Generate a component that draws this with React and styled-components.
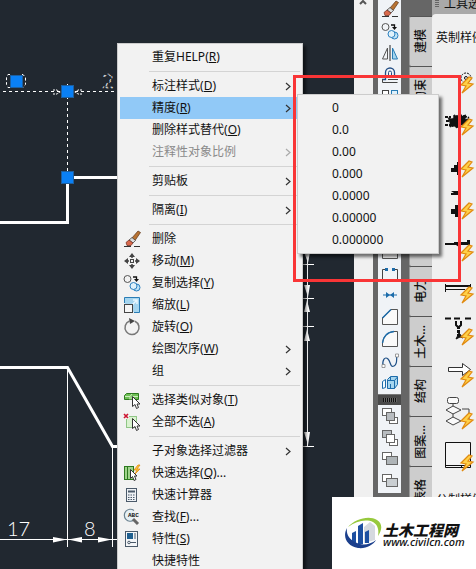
import React from "react"
import styled, { createGlobalStyle, css } from "styled-components"

const GlobalStyle = createGlobalStyle`
  * {
    box-sizing: border-box;
  }
  body {
    margin: 0;
    overflow: hidden;
    font-family: "Noto Sans", "Noto Sans CJK SC", sans-serif;
    font-size: 12px;
    color: #111;
  }
  button {
    border: none;
    background: none;
    padding: 0;
    font: inherit;
    color: inherit;
  }
  svg {
    display: block;
    flex: none;
  }
`

const Screen = styled.div`
  position: relative;
  display: flex;
  height: 100vh;
  overflow: hidden;
  background-color: #212830;
`

const Canvas = styled.main`
  flex: 1;
  min-width: 0;
  overflow: hidden;
`

const ScrollTrack = styled.div`
  width: 19px;
  background-color: #f0f0f0;
  display: flex;
  justify-content: center;
`

const ToolColumn = styled.div`
  width: 36px;
  padding: 0 8px 0 5px;
  background-color: #666;
`

const Toolbar = styled.div`
  display: flex;
  flex-direction: column;
  margin-top: -2px;
  background-color: #f0f3f7;
  .grip {
    height: 11px;
    background-color: #4a4a4a;
    border-top: 1px solid #777;
    display: flex;
    align-items: center;
    justify-content: center;
    &::after {
      content: "";
      width: 14px;
      height: 4px;
      background: repeating-linear-gradient(90deg, #111 0 1px, #666 1px 2px);
    }
  }
`

const ToolButton = styled.button`
  height: 22px;
  display: flex;
  align-items: center;
  justify-content: center;
`

const TabColumn = styled.div`
  width: 23px;
  padding-top: 16px;
  background-color: #666;
`

const Tab = styled.button`
  width: 23px;
  height: 50px;
  display: flex;
  align-items: center;
  justify-content: center;
  background-color: #cdcdcd;
  border-top: 1px solid #555;
  border-left: 1px solid #999;
  border-radius: 2px 0 0 2px;
  span {
    writing-mode: vertical-rl;
    text-orientation: sideways;
    transform: rotate(180deg);
    line-height: 20px;
    font-weight: 500;
  }
`

const Palette = styled.aside`
  width: 44px;
  background-color: #a9a9a9;
  overflow: hidden;
  white-space: nowrap;
  header {
    height: 14px;
    padding: 0 0 6px 3px;
    display: flex;
    align-items: center;
    gap: 5px;
    line-height: 20px;
  }
`

const PaletteBody = styled.div`
  background-color: #f0f0f0;
  border-radius: 4px 0 0 0;
  height: 100%;
`

const GroupTitle = styled.h2`
  margin: 0;
  height: 42px;
  padding: 14px 0 0 4px;
  line-height: 20px;
  font-size: 12px;
  font-weight: 400;
`

const PaletteItem = styled.button`
  display: block;
  height: 42px;
`

const panel = css`
  position: absolute;
  display: flex;
  flex-direction: column;
  padding: 2px;
  background-color: #f2f2f2;
  border: 1px solid #ccc;
  box-shadow: 3px 3px 3px rgba(0, 0, 0, 0.55);
`

const ContextMenu = styled.div`
  ${panel}
  left: 117px;
  top: 43px;
  width: 186px;
  hr {
    width: 151px;
    height: 1px;
    margin: 3px 0 3px 29px;
    border: none;
    background-color: #d4d4d4;
  }
`

const SubMenu = styled.div`
  ${panel}
  left: 297px;
  top: 94px;
  width: 142px;
`

const MenuItem = styled.button`
  flex: none;
  height: 22px;
  display: flex;
  align-items: center;
  text-align: left;
  white-space: nowrap;
  line-height: 20px;
  color: ${({ $disabled }) => ($disabled ? "#8a8a8a" : "#111")};
  background-color: ${({ $active }) => ($active ? "#91c9f7" : "transparent")};
  .icon {
    width: 32px;
    padding-left: 3px;
  }
  .label {
    flex: 1;
  }
  .arrow {
    margin-right: 9px;
  }
`

const RedFrame = styled.div`
  position: absolute;
  left: 293px;
  top: 75px;
  width: 168px;
  height: 207px;
  border: 3px solid #f93536;
  pointer-events: none;
`

const Watermark = styled.a`
  position: absolute;
  right: 0;
  bottom: 0;
  width: 144px;
  height: 72px;
  padding: 0 0 1px 12px;
  display: flex;
  align-items: center;
  background-color: #fff;
  color: #111;
  text-decoration: none;
  white-space: nowrap;
  font-style: italic;
  .site {
    display: flex;
    flex-direction: column;
    padding-top: 6px;
  }
  strong {
    font-size: 15px;
    line-height: 12px;
    font-weight: 900;
  }
  small {
    font-size: 11px;
    line-height: 12px;
    font-weight: 500;
  }
`

const Svg = ({ size = 18, width = size, height = size, children }) => (
  <svg width={width} height={height} viewBox={`0 0 ${width} ${height}`} fill="none" aria-hidden="true">
    {children}
  </svg>
)

/* modify tools, shared by the menu and the toolbar */
const Eraser = () => (
  <Svg>
    <path d="M1 16.500h7M11 16.500h6" stroke="#333" />
    <path d="M8.500 8.500L15 1l2.500 1.500L12 10.500z" fill="#b87333" stroke="#5b3518" strokeWidth=".7" />
    <path d="M6 10l3-2.500 3.500 3L10 13z" fill="#dcdcdc" stroke="#333" strokeWidth=".7" />
    <path d="M3 12.500L6 10l4 3-2 2.500H4z" fill="#d9694c" stroke="#6a2a1c" strokeWidth=".7" />
  </Svg>
)
const Move = () => (
  <Svg>
    <path d="M9 1l3 4H6zM9 17l3-4H6zM1 9l4-3v6zM17 9l-4-3v6z" fill="#444" />
    <path d="M9 4v2M9 12v2M4 9h2M12 9h2" stroke="#444" strokeWidth="1.500" />
    <rect x="7.500" y="7.500" width="3" height="3" stroke="#444" />
  </Svg>
)
const Copy = () => (
  <Svg>
    <circle cx="4.500" cy="5" r="3.500" stroke="#555" />
    <path d="M10 3h3.500v3" stroke="#111" strokeWidth="1.300" />
    <path d="M11 5h5l-2.500 3z" fill="#111" />
    <circle cx="13.500" cy="13.500" r="3.500" fill="#bfe3f7" stroke="#2a80c0" />
    <circle cx="10.500" cy="12" r="3.500" fill="#dff1fb" stroke="#2a80c0" />
  </Svg>
)
const Scale = () => (
  <Svg>
    <path d="M1.500 7V1.500h15v15H11" fill="#a5d5ef" stroke="#2a7db5" />
    <path d="M9 9l5-5M10 4h4v4" stroke="#e8f6fd" strokeWidth="1.500" />
    <rect x="1.500" y="8.500" width="8" height="8" fill="#f5f5f5" stroke="#444" />
  </Svg>
)
const Rotate = () => (
  <Svg>
    <path d="M12 3.200a7 7 0 1 1-5.500-.2" stroke="#777" strokeWidth="1.500" />
    <path d="M6 0l6 3-5 3z" fill="#444" />
  </Svg>
)
const SelectCursor = () => <path d="M9.500 5.500v10l2.500-2 1.500 4 2-1-1.500-3.500h3z" fill="#fff" stroke="#333" />
const SelectSimilar = () => (
  <Svg>
    <path d="M1.500 4.500l2-2h12v6h-14z" fill="#6fbf55" stroke="#2d7a1f" />
    <path d="M2 5.500h5v3M9 8.500v-3h6M7 5.500l2-2.500" stroke="#cdeec0" />
    <SelectCursor />
  </Svg>
)
const Deselect = () => (
  <Svg>
    <rect x="3.500" y="3.500" width="10" height="11" fill="#d9f2cf" stroke="#3a9a2a" strokeDasharray="1 1" />
    <path d="M0 0h6v6H0z" fill="#f2f2f2" />
    <path d="M1 1l4 4M5 1L1 5" stroke="#cc1530" strokeWidth="1.600" />
    <SelectCursor />
  </Svg>
)
const QuickSelect = () => (
  <Svg>
    <rect x="1.500" y="2.500" width="9" height="13" fill="#9fd38b" stroke="#2d7a1f" />
    <path d="M4.500 3v12" stroke="#2d7a1f" />
    <path d="M15 1l-4 5h3l-2 4 5-5h-3l3-4z" fill="#ffc53a" stroke="#e08a10" strokeWidth=".8" />
    <path d="M7.500 5.500v9l2-2 1.500 4 2-1-1.500-3.500h2.500z" fill="#fff" stroke="#333" />
  </Svg>
)
const Calculator = () => (
  <Svg>
    <rect x="3.500" y="2.500" width="10" height="13" fill="#eef1f5" stroke="#4b5a6a" />
    <path d="M5 5.500h7" stroke="#4b5a6a" strokeWidth="2" />
    <path d="M5 9h7M5 11.500h7M5 13.500h7" stroke="#4b5a6a" strokeDasharray="1.500 1" />
  </Svg>
)
const Find = () => (
  <Svg>
    <path d="M11 2.500A6 6 0 1 0 11 12" fill="#e6f0f5" stroke="#6b8290" strokeWidth="1.200" />
    <path d="M10 11l5 5" stroke="#666" strokeWidth="3" />
    <text x="5" y="9" fontSize="6" fontWeight="700" fontFamily="Liberation Mono, monospace" fill="#111">ABC</text>
  </Svg>
)
const Properties = () => (
  <Svg>
    <rect x="2.500" y="1.500" width="12" height="15" fill="#f4f6f8" stroke="#4b5a6a" />
    <rect x="4" y="3" width="6" height="6" fill="#1f5f8f" />
    <path d="M11 4h2M11 6h2M11 8h2M7 12.500h6" stroke="#4b5a6a" />
    <circle cx="6" cy="12.500" r="1.300" stroke="#4b5a6a" />
  </Svg>
)

const Mirror = () => (
  <Svg>
    <path d="M9 1v16" stroke="#222" />
    <path d="M6.500 4v11h-5z" stroke="#555" />
    <path d="M11.500 4v11h5z" fill="#a5d5ef" stroke="#2a7db5" />
  </Svg>
)
const Offset = () => (
  <Svg>
    <path d="M1 13.500h3.500V6.500a4.500 4.500 0 0 1 9 0v4" stroke="#234f86" strokeWidth="1.300" />
    <path d="M7.500 10.500v-4a1.500 1.500 0 0 1 3 0v4z" stroke="#234f86" />
    <path d="M7 13.500h10M1.500 13v3.500h15" stroke="#444" />
  </Svg>
)
const ArrayTool = () => (
  <Svg>
    <rect x="1.500" y="2.500" width="6" height="5" fill="#fff" stroke="#444" />
    <rect x="10.500" y="2.500" width="6" height="5" fill="#dff1fb" stroke="#2a7db5" />
    <rect x="1.500" y="10.500" width="6" height="5" stroke="#2a7db5" />
    <rect x="10.500" y="10.500" width="6" height="5" stroke="#2a7db5" />
  </Svg>
)
const BreakTool = () => (
  <Svg>
    <path d="M5 5.500H1.500V16M13 5.500h3.500V16" stroke="#444" />
    <path d="M4 4h3v3H4zM11 4h3v3h-3z" fill="#1c6cab" />
  </Svg>
)
const Join = () => (
  <Svg>
    <path d="M2 9h14" stroke="#1c6cab" />
    <path d="M5 6l4 3-4 3zM13 6l-4 3 4 3z" fill="#1c6cab" />
  </Svg>
)
const Chamfer = () => (
  <Svg>
    <path d="M1.500 9.500v7h15v-15H10L1.500 10z" fill="#fafafa" stroke="#555" />
    <path d="M1.500 10L10 1.500" stroke="#1c6cab" strokeWidth="1.400" />
  </Svg>
)
const Fillet = () => (
  <Svg>
    <path d="M1.500 13v3.500h15v-15H13C6 2 2 7 1.500 13z" fill="#fafafa" stroke="#555" />
    <path d="M1.500 13C2 7 6 2 13 1.500" stroke="#1c6cab" strokeWidth="1.400" />
  </Svg>
)
const Spline = () => (
  <Svg>
    <path d="M2 14C1 8 4 4 7 7s2 9 6 7 2-7 3-11" stroke="#1c4f86" strokeWidth="1.200" />
    <path d="M1 12.500h3v3H1zM14.500 2h3v3h-3z" fill="#fff" stroke="#777" strokeWidth=".7" />
  </Svg>
)
const Explode = () => (
  <Svg>
    <path d="M6.500 5.500l3-3h7v8l-3 4h-7z" fill="#a5d5ef" stroke="#1c6cab" />
    <path d="M6.500 6.500h7v8M13.500 6.500l3-3.500M9.500 3v3M9.500 10v5" stroke="#1c6cab" />
    <path d="M1.500 7.500v7l3-1v-8z" fill="#f5fbff" stroke="#1c6cab" />
  </Svg>
)
const OrderIcon = ({ back, front, extra }) => (
  <Svg>
    <rect x="1.500" y="1.500" width="9" height="7" fill={back} stroke="#666" />
    {extra && <rect x="8.500" y="10.500" width="8" height="6" fill="#fff" stroke="#666" />}
    <rect x="5.500" y="5.500" width={extra ? 8 : 11} height="8" fill={front} stroke="#666" />
  </Svg>
)

const modifyTools = [
  ["删除", Eraser],
  ["复制", Copy],
  ["镜像", Mirror],
  ["偏移", Offset],
  ["阵列", ArrayTool],
  ["移动", Move],
  ["旋转", Rotate],
  ["缩放", Scale],
  ["拉伸", Scale],
  ["修剪", Join],
  ["延伸", Join],
  ["打断于点", Chamfer],
  ["打断", BreakTool],
  ["合并", Join],
  ["倒角", Chamfer],
  ["圆角", Fillet],
  ["光顺曲线", Spline],
  ["分解", Explode],
]

const orderTools = [
  ["前置", { back: "#fff", front: "#b8bcc0", extra: true }],
  ["后置", { back: "#b8bcc0", front: "#fff", extra: true }],
  ["置于对象之上", { back: "#fff", front: "#aeb4b8" }],
  ["置于对象之下", { back: "#fff", front: "#c9ced2" }],
]

const menuItems = [
  { text: "重复HELP", mnemonic: "R" },
  null,
  { text: "标注样式", mnemonic: "D", sub: true },
  { text: "精度", mnemonic: "R", sub: true, active: true },
  { text: "删除样式替代", mnemonic: "O" },
  { text: "注释性对象比例", sub: true, disabled: true },
  null,
  { text: "剪贴板", sub: true },
  null,
  { text: "隔离", mnemonic: "I", sub: true },
  null,
  { text: "删除", Icon: Eraser },
  { text: "移动", mnemonic: "M", Icon: Move },
  { text: "复制选择", mnemonic: "Y", Icon: Copy },
  { text: "缩放", mnemonic: "L", Icon: Scale },
  { text: "旋转", mnemonic: "O", Icon: Rotate },
  { text: "绘图次序", mnemonic: "W", sub: true },
  { text: "组", sub: true },
  null,
  { text: "选择类似对象", mnemonic: "T", Icon: SelectSimilar },
  { text: "全部不选", mnemonic: "A", Icon: Deselect },
  null,
  { text: "子对象选择过滤器", sub: true },
  { text: "快速选择", mnemonic: "Q", dots: true, Icon: QuickSelect },
  { text: "快速计算器", Icon: Calculator },
  { text: "查找", mnemonic: "F", dots: true, Icon: Find },
  { text: "特性", mnemonic: "S", Icon: Properties },
  { text: "快捷特性" },
]

const precisions = ["0", "0.0", "0.00", "0.000", "0.0000", "0.00000", "0.000000"]

const tabs = ["建模", "约束", "注释", "建筑", "机械", "电力", "土木...", "结构", "图案...", "表格"]

/* symbols of the palette blocks */
const symbols = [
  <g stroke="#111">
    <circle cx="34" cy="22" r="5" strokeDasharray="2 1" />
    <circle cx="34" cy="22" r="1.500" />
  </g>,
  <g stroke="#111" strokeDasharray="3 1">
    <path d="M13 19h6M14 23h6M13 27h6M32 18l5 2M33 25l6-2" strokeWidth="2" />
    <path d="M18 24l-2-4 5 1 1-4 4 1 1-4 3 4 4-1-1 4 5 1-5 3 2 3-7-1-3 3-3-2-4 1v-4z" fill="#111" />
  </g>,
  <path d="M19 28h3v-3h3v-3h4v13h-4v-3h-6z" fill="#111" />,
  <path d="M19 9h10v4H19v-2h3zM19 27h4v-4h4v12h-4v-3h-4z" fill="#111" />,
  <path d="M13 19h9v-1h4l3-2v2h6v-2h3v5h-9l-2 2-3-2h-11z" fill="#111" />,
  <g stroke="#111">
    <path d="M13.500 18v8M38.500 18v3" />
    <path d="M13 20h26" strokeWidth="2" />
    <path d="M13 23.500h20" />
  </g>,
  <g stroke="#111">
    <path d="M13 10.500h6M22 10.500h6M33 10.500h6" strokeWidth="2" />
    <path d="M24 13v4l2 2M29 13v4l-2 2" strokeWidth="2" />
    <path d="M26.500 18v10" strokeWidth="3" strokeDasharray="3 1" />
    <path d="M24 31l3-6 4 5-3-1z" fill="#111" />
  </g>,
  <path d="M16.500 17.500h14v-4l8 6-8 6v-4h-14z" fill="#fff" stroke="#333" />,
  <g stroke="#444" fill="#fafafa">
    <path d="M21 7v22M30 17h7v10" fill="none" />
    <rect x="15.500" y="5.500" width="11" height="6" rx="2" />
    <path d="M14 18l7-4 8 4-8 4zM14 29l7-4 8 4-8 4z" />
  </g>,
  <g stroke="#111">
    <path d="M13.500 8.500h25v25h-25z" fill="#f4f4f4" />
    <path d="M14 31.500h24M29.500 31v3" />
  </g>,
]

const Bolt = () => (
  <path d="M37 21L29 29l5 1-4 7 11-9-5-1 4-5z" fill="#ffd047" stroke="#e08a10" strokeWidth="1.200" />
)

const Drawing = () => (
  <svg width="354" height="569" viewBox="0 0 354 569" fill="none" stroke="#fff">
    {/* outline of the part */}
    <g strokeWidth="3">
      <path d="M0 222.500h67.500v-45H354" />
      <path d="M0 367.500h67.500l45 79H125" />
    </g>
    {/* selected dimension */}
    <g strokeDasharray="3 3">
      <path d="M3 91.500h115" />
      <path d="M67.500 84v88" />
    </g>
    <g strokeDasharray="2 1">
      <path d="M53 90h4l4 3M53 94h4l4-3M82 90h-4l-4 3M82 94h-4l-4-3" />
    </g>
    <g strokeDasharray="3 2">
      <path d="M10 74.500H8l-1.500 3v7l1.500 3h2M22 74.500h1l2.500 3v7l-2.500 3h-1" />
    </g>
    <text x="102" y="88" fontSize="20" fontFamily="Lato, sans-serif" fontWeight="300" strokeWidth=".7" strokeDasharray="2 3">2</text>
    {/* lower dimension chain */}
    <path d="M67.500 368v179M112.500 446v101M0 539.500h118" />
    <path d="M53 537l14 2.500-14 3zM82 537l-14 2.500 14 3zM98 537l14 2.500-14 3z" fill="#fff" stroke="none" />
    <g fill="#fff" stroke="none" fontSize="20" fontWeight="300" fontFamily="Lato, sans-serif">
      <text x="7" y="536">17</text>
      <text x="84" y="536">8</text>
    </g>
    {/* right dimension chain */}
    <path d="M307.500 250v196M303 264.500h11M303 298.500h11M303 326.500h11M303 446.500h11" />
    <path d="M304 252h6l-2 11zM304 285h6l-2 12zM304 312h6l-3-12zM304 341h6l-3-12zM304 432h6l-2 13z" fill="#fff" stroke="none" />
    <g fill="#0a80f5" stroke="#1c5e9e">
      <rect x="10.500" y="75.500" width="12" height="12" />
      <rect x="61.500" y="85.500" width="12" height="12" />
      <rect x="61.500" y="171.500" width="12" height="12" />
    </g>
  </svg>
)

const Logo = () => (
  <Svg width={39} height={34}>
    <path d="M8 17l4-2v12l-4-1z" fill="#1d4fa0" />
    <path d="M14 10l5-3v21h-5z" fill="#1d4fa0" />
    <path d="M20 11l6-5 5 4v14l-11 3z" fill="#d5d9df" />
    <path d="M21 16l4-2v13h-4z" fill="#1d4fa0" />
    <path d="M3 12C-2 21 3 30 14 32c8 1 15-3 18-8-6 5-15 6-21 2-6-3-9-8-8-14z" fill="#1b3f8c" />
    <path d="M4 11C11 3 25-1 33 4c6 4 5 10 1 16 1-6 0-11-5-14C22 3 12 5 4 11z" fill="#97c93d" />
  </Svg>
)

const App = () => (
  <>
    <GlobalStyle />
    <Screen>
      <Canvas>
        <Drawing />
      </Canvas>
      <ScrollTrack>
        <Svg width={9} height={6}>
          <path d="M1 4l3-3 3 3" stroke="#555" strokeWidth="2" />
        </Svg>
      </ScrollTrack>
      <ToolColumn>
        <Toolbar>
          {modifyTools.map(([name, Icon]) => (
            <ToolButton key={name} aria-label={name}>
              <Icon />
            </ToolButton>
          ))}
          <div className="grip" />
          {orderTools.map(([name, look]) => (
            <ToolButton key={name} aria-label={name}>
              <OrderIcon {...look} />
            </ToolButton>
          ))}
        </Toolbar>
      </ToolColumn>
      <TabColumn>
        {tabs.map(name => (
          <Tab key={name}>
            <span>{name}</span>
          </Tab>
        ))}
      </TabColumn>
      <Palette>
        <header>
          <Svg width={4} height={8}>
            <path d="M1 0v8M3 0v8" stroke="#222" strokeDasharray="1 1" />
          </Svg>
          工具选项板
        </header>
        <PaletteBody>
          <GroupTitle>英制样例</GroupTitle>
          {symbols.map((symbol, i) => (
            <PaletteItem key={i}>
              <Svg width={44} height={42}>
                {symbol}
                <Bolt />
              </Svg>
            </PaletteItem>
          ))}
          <GroupTitle>公制样例</GroupTitle>
        </PaletteBody>
      </Palette>

      <ContextMenu role="menu">
        {menuItems.map((item, i) => {
          if (!item) return <hr key={i} />
          const { text, mnemonic, dots, sub, active, disabled, Icon } = item
          return (
            <MenuItem key={i} role="menuitem" disabled={disabled} $active={active} $disabled={disabled}>
              <span className="icon">{Icon && <Icon />}</span>
              <span className="label">
                {text}
                {mnemonic && <>(<u>{mnemonic}</u>)</>}
                {dots && "..."}
              </span>
              {sub && (
                <span className="arrow">
                  <Svg width={6} height={9}>
                    <path d="M1 1l4 3.500L1 8" stroke={disabled ? "#aaa" : "#333"} strokeWidth="1.200" />
                  </Svg>
                </span>
              )}
            </MenuItem>
          )
        })}
      </ContextMenu>
      <SubMenu role="menu">
        {precisions.map(value => (
          <MenuItem key={value} role="menuitem">
            <span className="icon" />
            <span className="label">{value}</span>
          </MenuItem>
        ))}
      </SubMenu>
      <RedFrame />

      <Watermark href="#">
        <Logo />
        <span className="site">
          <strong>土木工程网</strong>
          <small>www.civilcn.com</small>
        </span>
      </Watermark>
    </Screen>
  </>
)

export default App
